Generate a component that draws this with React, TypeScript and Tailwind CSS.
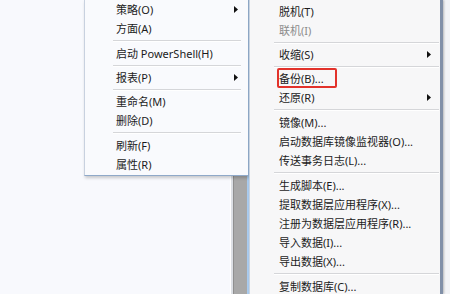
import React from 'react';

type Entry =
  | { kind: 'item'; label: string; sub?: boolean; disabled?: boolean; marked?: boolean }
  | { kind: 'sep'; h: number };

const FONT = '"Noto Sans", "Noto Sans CJK SC", sans-serif';

const leftMenu: Entry[] = [
  { kind: 'item', label: '策略(O)', sub: true },
  { kind: 'item', label: '方面(A)' },
  { kind: 'sep', h: 6 },
  { kind: 'item', label: '启动 PowerShell(H)' },
  { kind: 'sep', h: 5 },
  { kind: 'item', label: '报表(P)', sub: true },
  { kind: 'sep', h: 5 },
  { kind: 'item', label: '重命名(M)' },
  { kind: 'item', label: '删除(D)' },
  { kind: 'sep', h: 6 },
  { kind: 'item', label: '刷新(F)' },
  { kind: 'item', label: '属性(R)' },
];

const rightMenu: Entry[] = [
  { kind: 'item', label: '脱机(T)' },
  { kind: 'item', label: '联机(I)', disabled: true },
  { kind: 'sep', h: 5 },
  { kind: 'item', label: '收缩(S)', sub: true },
  { kind: 'sep', h: 5 },
  { kind: 'item', label: '备份(B)...', marked: true },
  { kind: 'item', label: '还原(R)', sub: true },
  { kind: 'sep', h: 6 },
  { kind: 'item', label: '镜像(M)...' },
  { kind: 'item', label: '启动数据库镜像监视器(O)...' },
  { kind: 'item', label: '传送事务日志(L)...' },
  { kind: 'sep', h: 6 },
  { kind: 'item', label: '生成脚本(E)...' },
  { kind: 'item', label: '提取数据层应用程序(X)...' },
  { kind: 'item', label: '注册为数据层应用程序(R)...' },
  { kind: 'item', label: '导入数据(I)...' },
  { kind: 'item', label: '导出数据(X)...' },
  { kind: 'sep', h: 6 },
  { kind: 'item', label: '复制数据库(C)...' },
];

function Arrow() {
  return (
    <svg width="4" height="7" viewBox="0 0 4 7" className="shrink-0">
      <path d="M0 0 L4 3.5 L0 7 Z" fill="#111" />
    </svg>
  );
}

function MenuList({ entries, textPad, sepPad, arrowPad }: { entries: Entry[]; textPad: string; sepPad: string; arrowPad: string }) {
  return (
    <div className="flex flex-col">
      {entries.map((e, i) =>
        e.kind === 'sep' ? (
          <div key={i} className={`flex flex-col justify-center ${sepPad}`} style={{ height: e.h }}>
            <div className="h-px bg-[#d5d6d9]" />
            <div className="h-px bg-white" />
          </div>
        ) : (
          <div key={i} className={`flex h-[19px] items-center justify-between ${textPad} ${arrowPad}`}>
            <span
              className={`relative text-[11px] leading-none ${e.disabled ? 'text-[#8c8c8c]' : 'text-[#1c1c1c]'}`}
            >
              {e.label}
              {e.marked && (
                <span className="absolute left-[-2px] top-[-5px] h-[20px] w-[60px] rounded-[2px] border-2 border-[#e2322b]" />
              )}
            </span>
            {e.sub && <Arrow />}
          </div>
        )
      )}
    </div>
  );
}

export default function App() {
  return (
    <div className="relative flex h-[294px] w-[450px] overflow-hidden bg-[#f7f8fc]" style={{ fontFamily: FONT }}>
      <div className="h-full w-[230px] bg-[#f8f9fd]" />
      <div className="flex h-full w-[19px]">
        <div className="w-px bg-white" />
        <div className="w-[2px] bg-[#dcdfe4]" />
        <div className="w-px bg-[#8f8f8f]" />
        <div className="w-[13px] bg-[#a8a8a8]" />
        <div className="w-[2px] bg-[#a9cbee]" />
      </div>
      <div className="h-full flex-1 bg-[#f2f3f6]" />

      {/* left context menu */}
      <div className="absolute left-[84px] top-0 w-[165px] border-x border-b border-l-[#c8d1df] border-r-[#8fa9c9] border-b-[#8fa9c9] bg-[#f9fafd] pb-[1px] shadow-[1px_2px_3px_rgba(0,0,0,0.2)]">
        <MenuList entries={leftMenu} textPad="pl-[31px]" sepPad="ml-[28px] mr-[7px]" arrowPad="pr-[10px]" />
      </div>

      {/* right context menu */}
      <div className="absolute left-[249px] top-0 h-[294px] w-[194px] border-l border-r-[3px] border-l-[#c9d3e0] border-r-[#8190a8] bg-[#f7f7f8] pt-[2px] shadow-[1px_0_2px_rgba(0,0,0,0.25)]">
        <MenuList entries={rightMenu} textPad="pl-[29px]" sepPad="ml-[24px] mr-[1px]" arrowPad="pr-[9px]" />
      </div>
    </div>
  );
}
